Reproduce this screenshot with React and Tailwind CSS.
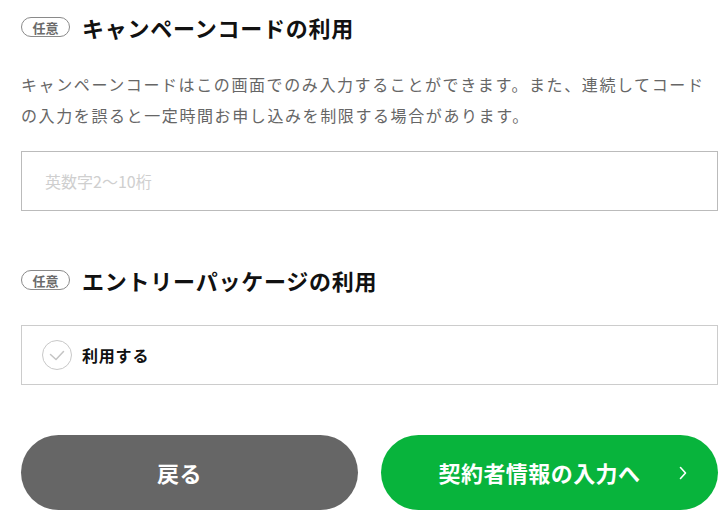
import React, { useState } from "react";

const Badge = () => (
  <span className="inline-flex h-[20px] w-[49px] shrink-0 items-center justify-center rounded-full border border-[#8a8a8a] text-[13px] font-bold leading-none text-[#6b6b6b]">
    任意
  </span>
);

const SectionTitle = ({ children, className = "" }) => (
  <div className={`flex items-center gap-[12px] ${className}`}>
    <Badge />
    <h2 className="text-[22px] font-bold leading-[32px] tracking-[0.035em] text-[#111]">
      {children}
    </h2>
  </div>
);

const App = () => {
  const [code, setCode] = useState("");
  const [useEntry, setUseEntry] = useState(false);

  return (
    <div
      className="w-[725px] bg-white pl-[21px] pr-[7px] pt-[11px] pb-[18px]"
      style={{ fontFamily: '"Noto Sans CJK JP", "Noto Sans", sans-serif' }}
    >
      {/* キャンペーンコード */}
      <SectionTitle>キャンペーンコードの利用</SectionTitle>

      <p className="mt-[26px] text-[16px] leading-[31px] tracking-[0.1em] text-[#666]">
        キャンペーンコードはこの画面でのみ入力することができます。また、連続してコードの入力を誤ると一定時間お申し込みを制限する場合があります。
      </p>

      <input
        type="text"
        value={code}
        onChange={(e) => setCode(e.target.value)}
        placeholder="英数字2〜10桁"
        className="mt-[20px] block h-[60px] w-full border border-[#bbb] px-[23px] text-[16px] text-[#333] outline-none placeholder:text-[#cfcfcf]"
      />

      {/* エントリーパッケージ */}
      <SectionTitle className="mt-[53px]">エントリーパッケージの利用</SectionTitle>

      <button
        type="button"
        onClick={() => setUseEntry(!useEntry)}
        className="mt-[29px] flex h-[60px] w-full items-center gap-[10px] border border-[#ccc] px-[20px] text-left"
      >
        <span
          className={`flex h-[30px] w-[30px] items-center justify-center rounded-full border ${
            useEntry ? "border-[#08b43c] bg-[#08b43c]" : "border-[#c8c8c8] bg-white"
          }`}
        >
          <svg width="16" height="11" viewBox="0 0 16 11" fill="none" className="mt-[1px]">
            <path
              d="M1.5 4.5 L7 9.5 L14.5 1.5"
              stroke={useEntry ? "#fff" : "#c4c4c4"}
              strokeWidth="1.5"
              strokeLinecap="round"
              strokeLinejoin="round"
            />
          </svg>
        </span>
        <span className="text-[16px] font-bold tracking-[0.05em] text-[#111]">利用する</span>
      </button>

      {/* Buttons */}
      <div className="mt-[50px] grid grid-cols-2 gap-[23px]">
        <button
          type="button"
          className="flex h-[75px] items-center justify-center rounded-full bg-[#666] pr-[20px] text-[22px] font-bold tracking-[0.02em] text-white"
        >
          戻る
        </button>
        <button
          type="button"
          className="relative flex h-[75px] items-center justify-center rounded-full bg-[#08b43c] pr-[20px] text-[22px] font-bold tracking-[0.02em] text-white"
        >
          契約者情報の入力へ
          <svg
            className="absolute right-[31px] top-1/2 -translate-y-1/2"
            width="8"
            height="14"
            viewBox="0 0 8 14"
            fill="none"
          >
            <path
              d="M1.5 1.5 L6.5 7 L1.5 12.5"
              stroke="#fff"
              strokeWidth="1.6"
              strokeLinecap="round"
              strokeLinejoin="round"
            />
          </svg>
        </button>
      </div>
    </div>
  );
};

export default App;
